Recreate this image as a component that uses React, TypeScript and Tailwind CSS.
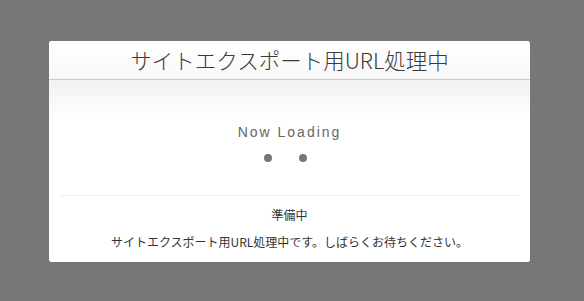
export default function App() {
  return (
    <div className="flex h-[301px] w-[584px] items-start bg-[#777777] pl-[49px] pt-[41px] font-['Noto_Sans_CJK_JP',sans-serif]">
      <div className="flex w-[481px] flex-col overflow-hidden rounded-[3px] bg-white">
        <div className="flex h-[39px] items-center justify-center border-b border-[#cccccc] bg-gradient-to-b from-white to-[#f8f8f8]">
          <h1 className="text-[21.5px] font-light leading-none text-[#3a3a3a]">サイトエクスポート用URL処理中</h1>
        </div>
        <div className="flex flex-col items-center bg-gradient-to-b from-[#f2f2f2] to-white to-[40px] px-[11px]">
          <p className="mt-[45px] font-['Liberation_Sans',sans-serif] text-[14px] leading-none tracking-[2px] text-[#666666]">
            Now Loading
          </p>
          <div className="mr-[9px] mt-[15px] flex gap-[27px]">
            <span className="h-[8px] w-[8px] rounded-full bg-[#777777]" />
            <span className="h-[8px] w-[8px] rounded-full bg-[#777777]" />
          </div>
          <div className="mt-[33px] h-px w-full bg-[#eeeeee]" />
          <p className="mt-[13px] text-[12px] leading-none text-[#333333]">準備中</p>
          <p className="mt-[15px] mb-[14px] text-[12px] leading-none text-[#333333]">
            サイトエクスポート用URL処理中です。しばらくお待ちください。
          </p>
        </div>
      </div>
    </div>
  )
}
